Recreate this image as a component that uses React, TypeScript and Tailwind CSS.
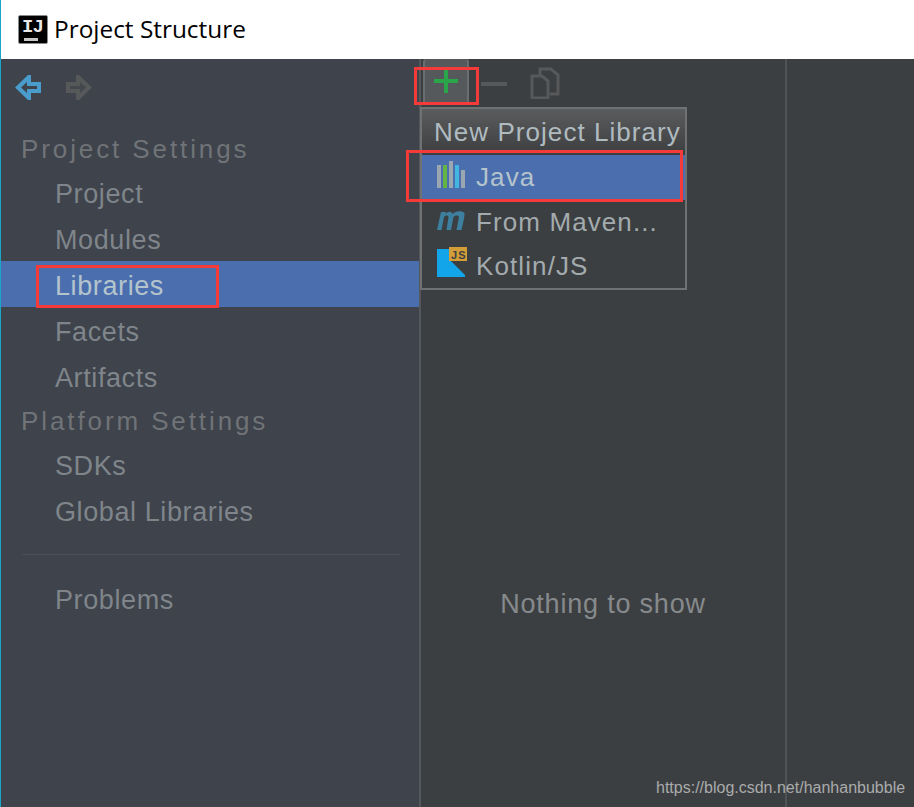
import type { ReactNode } from "react";

const sans = "font-['Liberation_Sans',Arial,sans-serif]";

function NavItem({ label, active }: { label: string; active?: boolean }) {
  return (
    <div
      className={`flex h-[46px] items-center pl-[54px] pt-[4px] text-[27px] tracking-[0.6px] ${
        active ? "bg-[#4b6eaf] text-[#b4c4cc]" : "text-[#7f858a]"
      }`}
    >
      {label}
    </div>
  );
}

function SectionTitle({ children, className }: { children: ReactNode; className: string }) {
  return (
    <div className={`flex items-center pl-[20px] text-[26px] tracking-[2.9px] text-[#707377] ${className}`}>
      {children}
    </div>
  );
}

function ArrowLeft() {
  return (
    <svg width="26" height="26" viewBox="0 0 26 26">
      <path d="M0 12.5 L13 0 H16 V7 H26 V18 H16 V25 H13 Z" fill="#4a9ccc" />
      <path d="M6 12.5 L12 7 V11 H22 V14 H12 V18 Z" fill="#3e434c" />
    </svg>
  );
}

function ArrowRight() {
  return (
    <svg width="26" height="26" viewBox="0 0 26 26">
      <path d="M26 12.5 L13 0 H10 V7 H0 V18 H10 V25 H13 Z" fill="#56585a" />
      <path d="M20 12.5 L14 7 V11 H4 V14 H14 V18 Z" fill="#44474c" />
    </svg>
  );
}

function JavaIcon() {
  return (
    <svg className="mb-[8px]" width="28" height="28" viewBox="0 0 28 28">
      <rect x="0" y="5" width="4" height="23" fill="#9aa7b0" />
      <rect x="6" y="5" width="4" height="23" fill="#62b543" />
      <rect x="12" y="1" width="4" height="27" fill="#9aa7b0" />
      <rect x="18" y="5" width="4" height="23" fill="#40b6e0" />
      <rect x="24" y="10" width="4" height="18" fill="#9aa7b0" />
    </svg>
  );
}

function MavenIcon() {
  return (
    <svg className="mb-[4px]" width="28" height="19" viewBox="0 0 28 19">
      <path
        d="M0 19 L4 1 H9 L8.6 3 C11 0 14.5 0 15.5 3 C18 0 25 -1 27.5 2 C28 4 26 13 24.5 19 H19.5 L22 6 C21 3.5 17.5 4.5 16.5 6 L14 19 H9.5 L11.5 6 C10.5 3.5 8 4.5 7 6 L4.5 19 Z"
        fill="#3d7f9e"
      />
    </svg>
  );
}

function KotlinJsIcon() {
  return (
    <svg className="mb-[8px]" width="30" height="30" viewBox="0 0 30 30">
      <path d="M0 2 H12 V14 H14 L28 28 V30 H0 Z" fill="#12a5ea" />
      <rect x="12" y="0" width="18" height="14" fill="#d39e38" />
      <text x="14" y="11.5" fontSize="11" fontWeight="700" fill="#3c3f41" fontFamily="Liberation Sans">
        JS
      </text>
    </svg>
  );
}

function PopupRow({ icon, label, active, tall }: { icon: ReactNode; label: string; active?: boolean; tall?: boolean }) {
  return (
    <div
      className={`flex items-center pl-[15px] text-[26px] tracking-[1.1px] ${tall ? "h-[45px]" : "h-11"} ${
        active ? "bg-[#4b6eaf] text-[#b4c4cc]" : "text-[#a3abae]"
      }`}
    >
      <span className="flex w-[39px] shrink-0 items-center">{icon}</span>
      <span>{label}</span>
    </div>
  );
}

export default function App() {
  return (
    <div className={`flex h-[807px] w-[914px] flex-col overflow-hidden border-l border-[#18a5c8] bg-white ${sans}`}>
      <header className="flex h-[59px] shrink-0 items-center gap-[6px] pl-[17px] font-['Open_Sans',sans-serif] text-[24.4px] text-black">
        <div className="relative h-[29px] w-[30px] rounded-[2px] border border-[#8a8a8a] bg-black">
          <span className="absolute left-[3px] top-[1px] font-['Liberation_Mono',monospace] text-[19px] font-bold leading-[20px] tracking-[-1px] text-[#e8e8e8]">
            IJ
          </span>
          <span className="absolute bottom-[2px] left-[5px] h-[3px] w-[14px] bg-[#c8c8c8]" />
        </div>
        <span>Project Structure</span>
      </header>

      <div className="relative flex min-h-0 flex-1">
        <aside className="w-[418px] shrink-0 bg-[#3e434c]">
          <div className="flex h-[71px] items-start gap-[25px] pl-[14px] pt-[16px]">
            <ArrowLeft />
            <ArrowRight />
          </div>
          <SectionTitle className="h-[39px]">Project Settings</SectionTitle>
          <NavItem label="Project" />
          <NavItem label="Modules" />
          <NavItem label="Libraries" active />
          <NavItem label="Facets" />
          <NavItem label="Artifacts" />
          <SectionTitle className="h-[42px] pt-[2px]">Platform Settings</SectionTitle>
          <NavItem label="SDKs" />
          <NavItem label="Global Libraries" />
          <div className="mx-[21px] mt-[21px] mb-[20px] h-px w-[378px] bg-[#4b5058]" />
          <NavItem label="Problems" />
        </aside>

        <main className="flex min-w-0 flex-1 border-l-2 border-[#55585a] bg-[#3c3f41]">
          <div className="relative w-[366px] shrink-0 border-r-2 border-[#505355]">
            <div className="flex h-[46px] items-start pl-[2px]">
              <div className="flex h-[46px] w-[46px] items-center justify-center rounded-[3px] border-2 border-t-0 border-[#6b6e70] bg-[#56595b]">
                <svg width="26" height="26" viewBox="0 0 26 26">
                  <path d="M11 1 H15 V11 H25 V15 H15 V25 H11 V15 H1 V11 H11 Z" fill="#2aa54a" />
                </svg>
              </div>
              <svg className="mt-[23px] ml-[12px]" width="26" height="4" viewBox="0 0 26 4">
                <rect width="26" height="4" fill="#56585a" />
              </svg>
              <svg className="mt-[8px] ml-[23px]" width="30" height="32" viewBox="0 0 30 32" fill="none" stroke="#56585a" strokeWidth="3">
                <path d="M10 8 V2 H21 L28 8 V27 H20" />
                <path d="M2 9 H12 L18 14 V31 H2 Z" />
              </svg>
            </div>
            <div className="flex h-[505px] items-end justify-center">
              <span className="mb-[-14px] text-[27px] tracking-[0.8px] text-[#868a8c]">Nothing to show</span>
            </div>
          </div>
          <div className="flex-1" />
        </main>

        <div className="absolute left-[419px] top-[48px] w-[267px] border-2 border-[#6f7173] bg-[#3c3f41]">
          <div className="flex h-[46px] items-center whitespace-nowrap bg-gradient-to-b from-[#5a5c5e] to-[#3d3e40] pl-3 text-[26px] tracking-[1.05px] text-[#b0bbc0]">
            New Project Library
          </div>
          <PopupRow icon={<JavaIcon />} label="Java" active tall />
          <PopupRow icon={<MavenIcon />} label="From Maven..." />
          <PopupRow icon={<KotlinJsIcon />} label="Kotlin/JS" />
        </div>

        <div className="absolute left-[413px] top-[8px] h-[38px] w-[65px] border-[3px] border-[#f53a3a]" />
        <div className="absolute left-[405px] top-[91px] h-[52px] w-[277px] border-[3px] border-[#f53a3a]" />
        <div className="absolute left-[35px] top-[206px] h-[43px] w-[183px] border-[3px] border-[#f53a3a]" />

        <span className="absolute left-[655px] top-[717px] text-[16px] text-[#a9abac]">
          https://blog.csdn.net/hanhanbubble
        </span>
      </div>
    </div>
  );
}
